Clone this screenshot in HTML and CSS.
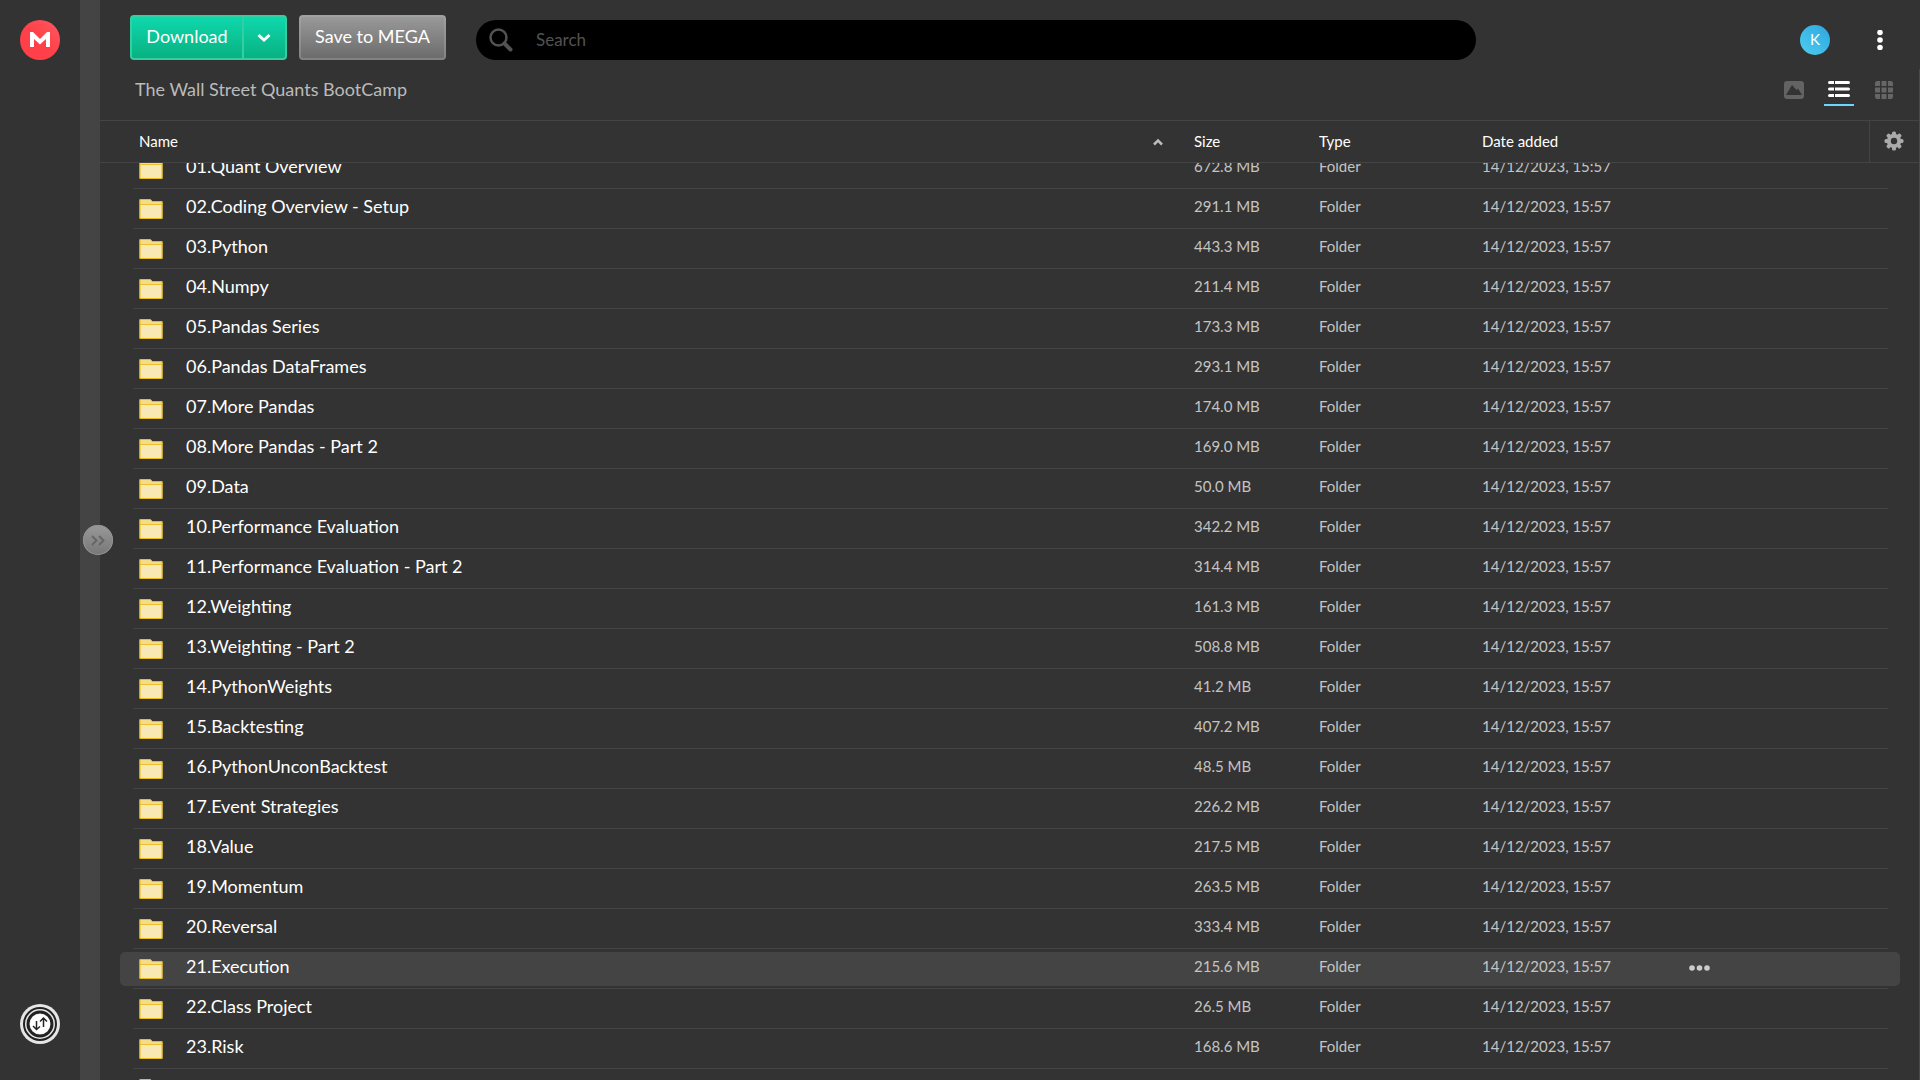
FILE: index.html
```html
<!DOCTYPE html>
<html lang="en">
<head>
<meta charset="utf-8">
<meta name="viewport" content="width=device-width, initial-scale=1">
<title>The Wall Street Quants BootCamp - MEGA</title>
<link rel="stylesheet" href="styles.css">
</head>
<body>
<svg class="sprite" aria-hidden="true">
  <symbol id="folder" viewBox="0 0 24 20">
    <path d="M.5 .5h11l2 2h10v17H.5z" fill="#f5dc8c"/>
    <path d="M1 6h22v13H1z" fill="#f8e8b4"/>
    <path d="M1 .5h10.500l1.500 2h10v17H1z" fill="none" stroke="#ecb913"/>
    <path d="M1 5.500h22" stroke="#ecc02c"/>
  </symbol>
</svg>
<div class="app">
  <nav class="rail" aria-label="Main">
    <a class="logo" href="#" aria-label="MEGA">
      <svg width="40" height="40" viewBox="0 0 40 40">
        <defs><linearGradient id="red" x1="0" y1="1" x2="1" y2="0"><stop offset=".5" stop-color="#ff4048"/><stop offset="1" stop-color="#ff5a64"/></linearGradient></defs>
        <circle cx="20" cy="20" r="20" fill="url(#red)"/>
        <path d="M10 27V12h3l7 7 7-7h3v15h-4v-8l-6 5.500-6-5.500v8z" fill="#fff"/>
      </svg>
    </a>
    <button class="transfers" type="button" aria-label="Transfers">
      <svg width="40" height="40" viewBox="0 0 40 40">
        <circle cx="20" cy="20" r="20" fill="#e6e6e6"/>
        <circle cx="20" cy="20" r="16" fill="none" stroke="#222" stroke-width="2"/>
        <circle cx="20" cy="20" r="12" fill="none" stroke="#222" stroke-width="3"/>
        <circle cx="20" cy="20" r="10" fill="#fff"/>
        <path d="M16.500 17v8m-3.500-3 3.500 3.500 3.500-3M23.500 23v-8.500m-3.500 3 3.500-3.500 3.500 3.500" fill="none" stroke="#222" stroke-width="1.500"/>
      </svg>
    </button>
  </nav>
  <aside class="strip">
    <button class="expand" type="button" aria-label="Expand panel">
      <svg width="30" height="30" viewBox="0 0 30 30"><path d="m9 11 4.500 4.500L9 20m7-9 4.500 4.500L16 20" fill="none" stroke="#666" stroke-width="2"/></svg>
    </button>
  </aside>
  <main class="main">
    <header class="topbar">
      <div class="split">
        <button class="download" type="button">Download</button>
        <button class="download-more" type="button" aria-label="Download options">
          <svg width="14" height="10" viewBox="0 0 14 10"><path d="m1.500 2 5.500 5 5.500-5" fill="none" stroke="#fff" stroke-width="3"/></svg>
        </button>
      </div>
      <button class="save" type="button">Save to MEGA</button>
      <label class="search">
        <svg width="24" height="24" viewBox="0 0 24 24" aria-hidden="true"><circle cx="9.500" cy="9.500" r="8" fill="none" stroke="#525252" stroke-width="2.500"/><path d="m15.500 15.500 6 6" stroke="#525252" stroke-width="4" stroke-linecap="round"/></svg>
        <input type="search" placeholder="Search" aria-label="Search">
      </label>
      <div class="account">
        <button class="avatar" type="button" aria-label="Account">K</button>
        <button class="menu" type="button" aria-label="Menu">
          <svg width="6" height="20" viewBox="0 0 6 20" fill="#fff"><circle cx="3" cy="2.500" r="2.800"/><circle cx="3" cy="10" r="2.800"/><circle cx="3" cy="17.500" r="2.800"/></svg>
        </button>
      </div>
    </header>
    <section class="panel">
      <div class="crumbs">
        <h1>The Wall Street Quants BootCamp</h1>
        <div class="views">
          <button type="button" aria-label="Media view">
            <svg width="20" height="18" viewBox="0 0 20 18"><rect width="20" height="18" rx="3" fill="#636363"/><path d="M2 14 8 4l4.500 5L14 7.500l4 6.500z" fill="#333"/></svg>
          </button>
          <button class="on" type="button" aria-label="List view" aria-pressed="true">
            <svg width="22" height="18" viewBox="0 0 22 18" fill="#fff"><path d="M1.500 0H6v3H1.500a1.500 1.500 0 0 1 0-3zM7 0h13.500a1.500 1.500 0 0 1 0 3H7zM1.500 6.500H6v3H1.500a1.500 1.500 0 0 1 0-3zM7 6.500h13.500a1.500 1.500 0 0 1 0 3H7zM1.500 13H6v3H1.500a1.500 1.500 0 0 1 0-3zM7 13h13.500a1.500 1.500 0 0 1 0 3H7z"/></svg>
          </button>
          <button type="button" aria-label="Grid view">
            <svg width="18" height="18" viewBox="0 0 18 18" fill="#666"><path d="M1.500 0H5v5H0V1.500zM6.500 0h5v5h-5zM13 0h3.500L18 1.500V5h-5zM0 6.500h5v5H0zM6.500 6.500h5v5h-5zM13 6.500h5v5h-5zM0 13h5v5H1.500L0 16.500zM6.500 13h5v5h-5zM13 13h5v3.500L16.500 18H13z"/></svg>
          </button>
        </div>
      </div>
      <div class="scroller" id="files">
        <table>
          <colgroup><col><col class="c-size"><col class="c-type"><col class="c-date"><col class="c-more"><col class="c-set"></colgroup>
          <thead>
            <tr>
              <th class="name" scope="col" aria-sort="ascending"><button type="button">Name <svg width="12" height="8" viewBox="0 0 12 8"><path d="m2 6.500 4-4 4 4" fill="none" stroke="#bbb" stroke-width="2.500"/></svg></button></th>
              <th scope="col">Size</th><th scope="col">Type</th><th scope="col">Date added</th><td></td>
              <td class="settings"><button type="button" aria-label="Column settings">
                <svg width="20" height="20" viewBox="-10 -10 20 20" fill="#aaa"><circle r="5.200" fill="none" stroke="#aaa" stroke-width="4"/><g id="teeth"><rect x="-2" y="-9.500" width="4" height="4" rx="1.500"/><rect x="-2" y="5.500" width="4" height="4" rx="1.500"/><rect x="-9.500" y="-2" width="4" height="4" rx="1.500"/><rect x="5.500" y="-2" width="4" height="4" rx="1.500"/></g><use href="#teeth" transform="rotate(45)"/></svg>
              </button></td>
            </tr>
          </thead>
          <tbody>
            <tr><td class="name"><svg><use href="#folder"/></svg>01.Quant Overview</td><td>672.8 MB</td><td>Folder</td><td>14/12/2023, 15:57</td><td></td><td></td></tr>
            <tr><td class="name"><svg><use href="#folder"/></svg>02.Coding Overview - Setup</td><td>291.1 MB</td><td>Folder</td><td>14/12/2023, 15:57</td><td></td><td></td></tr>
            <tr><td class="name"><svg><use href="#folder"/></svg>03.Python</td><td>443.3 MB</td><td>Folder</td><td>14/12/2023, 15:57</td><td></td><td></td></tr>
            <tr><td class="name"><svg><use href="#folder"/></svg>04.Numpy</td><td>211.4 MB</td><td>Folder</td><td>14/12/2023, 15:57</td><td></td><td></td></tr>
            <tr><td class="name"><svg><use href="#folder"/></svg>05.Pandas Series</td><td>173.3 MB</td><td>Folder</td><td>14/12/2023, 15:57</td><td></td><td></td></tr>
            <tr><td class="name"><svg><use href="#folder"/></svg>06.Pandas DataFrames</td><td>293.1 MB</td><td>Folder</td><td>14/12/2023, 15:57</td><td></td><td></td></tr>
            <tr><td class="name"><svg><use href="#folder"/></svg>07.More Pandas</td><td>174.0 MB</td><td>Folder</td><td>14/12/2023, 15:57</td><td></td><td></td></tr>
            <tr><td class="name"><svg><use href="#folder"/></svg>08.More Pandas - Part 2</td><td>169.0 MB</td><td>Folder</td><td>14/12/2023, 15:57</td><td></td><td></td></tr>
            <tr><td class="name"><svg><use href="#folder"/></svg>09.Data</td><td>50.0 MB</td><td>Folder</td><td>14/12/2023, 15:57</td><td></td><td></td></tr>
            <tr><td class="name"><svg><use href="#folder"/></svg>10.Performance Evaluation</td><td>342.2 MB</td><td>Folder</td><td>14/12/2023, 15:57</td><td></td><td></td></tr>
            <tr><td class="name"><svg><use href="#folder"/></svg>11.Performance Evaluation - Part 2</td><td>314.4 MB</td><td>Folder</td><td>14/12/2023, 15:57</td><td></td><td></td></tr>
            <tr><td class="name"><svg><use href="#folder"/></svg>12.Weighting</td><td>161.3 MB</td><td>Folder</td><td>14/12/2023, 15:57</td><td></td><td></td></tr>
            <tr><td class="name"><svg><use href="#folder"/></svg>13.Weighting - Part 2</td><td>508.8 MB</td><td>Folder</td><td>14/12/2023, 15:57</td><td></td><td></td></tr>
            <tr><td class="name"><svg><use href="#folder"/></svg>14.PythonWeights</td><td>41.2 MB</td><td>Folder</td><td>14/12/2023, 15:57</td><td></td><td></td></tr>
            <tr><td class="name"><svg><use href="#folder"/></svg>15.Backtesting</td><td>407.2 MB</td><td>Folder</td><td>14/12/2023, 15:57</td><td></td><td></td></tr>
            <tr><td class="name"><svg><use href="#folder"/></svg>16.PythonUnconBacktest</td><td>48.5 MB</td><td>Folder</td><td>14/12/2023, 15:57</td><td></td><td></td></tr>
            <tr><td class="name"><svg><use href="#folder"/></svg>17.Event Strategies</td><td>226.2 MB</td><td>Folder</td><td>14/12/2023, 15:57</td><td></td><td></td></tr>
            <tr><td class="name"><svg><use href="#folder"/></svg>18.Value</td><td>217.5 MB</td><td>Folder</td><td>14/12/2023, 15:57</td><td></td><td></td></tr>
            <tr><td class="name"><svg><use href="#folder"/></svg>19.Momentum</td><td>263.5 MB</td><td>Folder</td><td>14/12/2023, 15:57</td><td></td><td></td></tr>
            <tr><td class="name"><svg><use href="#folder"/></svg>20.Reversal</td><td>333.4 MB</td><td>Folder</td><td>14/12/2023, 15:57</td><td></td><td></td></tr>
            <tr class="active"><td class="name"><svg><use href="#folder"/></svg>21.Execution</td><td>215.6 MB</td><td>Folder</td><td>14/12/2023, 15:57</td><td><button class="more" type="button" aria-label="More options"><svg width="21" height="6" viewBox="0 0 21 6" fill="#ccc"><circle cx="3" cy="3" r="2.800"/><circle cx="10.500" cy="3" r="2.800"/><circle cx="18" cy="3" r="2.800"/></svg></button></td><td></td></tr>
            <tr><td class="name"><svg><use href="#folder"/></svg>22.Class Project</td><td>26.5 MB</td><td>Folder</td><td>14/12/2023, 15:57</td><td></td><td></td></tr>
            <tr><td class="name"><svg><use href="#folder"/></svg>23.Risk</td><td>168.6 MB</td><td>Folder</td><td>14/12/2023, 15:57</td><td></td><td></td></tr>
            <tr><td class="name"><svg><use href="#folder"/></svg></td><td></td><td></td><td></td><td></td><td></td></tr>
          </tbody>
        </table>
      </div>
    </section>
  </main>
</div>
<script src="script.js"></script>
</body>
</html>
```
FILE: styles.css
```css
* { box-sizing: border-box; }
body {
  margin: 0;
  background: #333;
  color: #fff;
  font: 18px/20px Lato, "Open Sans", sans-serif;
}
button { border: 0; padding: 0; background: none; color: inherit; font: inherit; cursor: pointer; }
svg { display: block; flex: none; }
.sprite { position: absolute; width: 0; height: 0; }

.app { display: flex; height: 100vh; }
.rail {
  display: flex;
  flex-direction: column;
  justify-content: space-between;
  align-items: center;
  flex: none;
  width: 80px;
  padding: 20px 0 36px;
}
.strip { position: relative; flex: none; width: 20px; background: #444; }
.expand {
  position: absolute;
  top: 50%;
  left: 3px;
  width: 30px;
  height: 30px;
  margin-top: -15px;
  border-radius: 50%;
  background: linear-gradient(#999, #777);
  box-shadow: inset 0 0 0 1px #939393;
}
.main { display: flex; flex: 1; flex-direction: column; min-width: 0; }

.topbar { display: flex; flex: none; height: 69px; padding: 15px 37px 0 30px; }
.split, .save {
  height: 45px;
  border-radius: 4px;
}
.split {
  display: flex;
  flex: none;
  margin-right: 12px;
  border: 2px solid #33cfa3;
  background: linear-gradient(#0fd8ae, #08b180);
}
.download { width: 110px; padding: 0 0 4px; }
.download-more { display: grid; place-items: center; width: 43px; padding-right: 2px; border-left: 2px solid #33cfa3; }
.save {
  flex: none;
  width: 147px;
  margin-right: 30px;
  padding: 0 0 4px;
  border: 2px solid transparent;
  background: linear-gradient(#999, #6c6c6c) padding-box, linear-gradient(#a2a2a2, #828282) border-box;
}
.search {
  display: flex;
  flex: 1;
  align-items: center;
  gap: 23px;
  max-width: 1000px;
  height: 40px;
  margin-top: 5px;
  padding: 0 13px;
  border-radius: 20px;
  background: #000;
}
.search input {
  flex: 1;
  min-width: 0;
  padding: 0;
  border: 0;
  outline: 0;
  background: none;
  color: #fff;
  font: inherit;
  font-size: 17px;
}
.search input::placeholder { color: #525252; opacity: 1; }
.account { display: flex; align-items: center; gap: 47px; height: 50px; margin-left: auto; }
.avatar {
  width: 30px;
  height: 30px;
  padding-bottom: 2px;
  border-radius: 50%;
  background: linear-gradient(45deg, #4fcdf0, #2ba6de);
  font-size: 15px;
}

.panel { display: flex; flex: 1; flex-direction: column; min-height: 0; border-right: 1px solid #4a4a4a; }
.crumbs { display: flex; flex: none; justify-content: space-between; height: 51px; padding: 7px 20px 0 35px; }
.crumbs h1 { margin: 3px 0 0; color: #bbb; font-size: 18px; font-weight: 400; }
.views { display: flex; gap: 15px; height: 30px; }
.views button { display: flex; justify-content: center; width: 30px; padding-top: 5px; }
.views .on { border-bottom: 2px solid #6cd5ff; }

.scroller { flex: 1; min-height: 0; overflow-y: auto; scrollbar-width: none; }
table { width: 100%; border-spacing: 0; table-layout: fixed; }
.c-size { width: 125px; }
.c-type { width: 163px; }
.c-date { width: 207px; }
.c-more { width: 180px; }
.c-set { width: 50px; }
th, td { padding: 0; text-align: left; }
thead th, thead td {
  position: sticky;
  top: 0;
  z-index: 2;
  height: 43px;
  border: solid #444;
  border-width: 1px 0;
  background: #333;
  font-size: 15px;
  font-weight: 400;
}
thead th { padding-bottom: 2px; }
thead .name button { display: flex; align-items: center; justify-content: space-between; width: 100%; padding: 0 30px 0 39px; }
thead .name svg { margin-top: 3px; }
thead .settings { padding: 0 2px 1px 0; border-left-width: 1px; }
.settings button { display: block; width: 100%; }
.settings svg { margin: 0 auto; }

tbody tr { position: relative; z-index: 0; }
tbody td { height: 40px; padding-bottom: 6px; color: #c4c4c4; font-size: 15px; }
tbody .name {
  padding-left: 86px;
  overflow: hidden;
  color: #fff;
  font-size: 18px;
  white-space: nowrap;
}
tbody .name > svg { position: absolute; top: 10px; left: 39px; width: 24px; height: 20px; }
tbody .name::after {
  position: absolute;
  right: 31px;
  bottom: 0;
  left: 33px;
  height: 1px;
  background: #444;
  content: "";
}
.active .name::before {
  position: absolute;
  z-index: -1;
  top: 3px;
  right: 19px;
  bottom: 3px;
  left: 20px;
  border-radius: 5px;
  background: #444;
  content: "";
}
.more { display: block; padding-top: 4px; }
```
FILE: script.js
```js
document.getElementById('files').scrollTop = 14;
```
